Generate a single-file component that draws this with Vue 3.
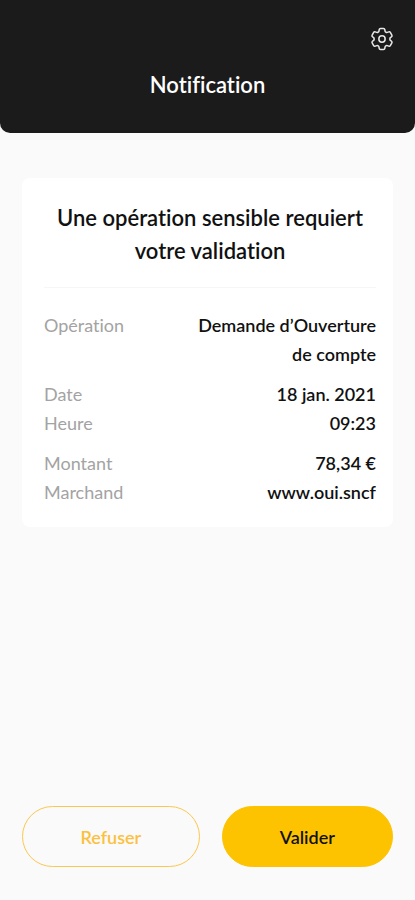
<template>
    <div class="screen">
        <header class="header">
            <button class="settings" type="button" aria-label="Paramètres">
                <svg viewBox="0 0 24 24" xmlns="http://www.w3.org/2000/svg">
                    <path d="M9.594 3.94c.09-.542.56-.94 1.11-.94h2.593c.55 0 1.02.398 1.11.94l.213 1.281c.063.374.313.686.645.87.074.04.147.083.22.127.325.196.72.257 1.075.124l1.217-.456a1.125 1.125 0 0 1 1.37.49l1.296 2.247a1.125 1.125 0 0 1-.26 1.431l-1.003.827c-.293.241-.438.613-.43.992a7.723 7.723 0 0 1 0 .255c-.008.378.137.75.43.991l1.004.827c.424.35.534.955.26 1.43l-1.298 2.247a1.125 1.125 0 0 1-1.369.491l-1.217-.456c-.355-.133-.75-.072-1.076.124a6.47 6.47 0 0 1-.22.128c-.331.183-.581.495-.644.869l-.213 1.281c-.09.543-.56.94-1.11.94h-2.594c-.55 0-1.019-.398-1.11-.94l-.213-1.281c-.062-.374-.312-.686-.644-.87a6.52 6.52 0 0 1-.22-.127c-.325-.196-.72-.257-1.076-.124l-1.217.456a1.125 1.125 0 0 1-1.369-.49l-1.297-2.247a1.125 1.125 0 0 1 .26-1.431l1.004-.827c.292-.24.437-.613.43-.991a6.932 6.932 0 0 1 0-.255c.007-.38-.138-.751-.43-.992l-1.004-.827a1.125 1.125 0 0 1-.26-1.43l1.297-2.247a1.125 1.125 0 0 1 1.37-.491l1.216.456c.356.133.751.072 1.076-.124.072-.044.146-.086.22-.128.332-.183.582-.495.644-.869l.214-1.28Z" />
                    <circle cx="12" cy="12" r="2.7" />
                </svg>
            </button>
            <h1>Notification</h1>
        </header>

        <main class="card">
            <h2>Une opération sensible requiert votre validation</h2>
            <dl v-for="(group, i) in groups" :key="i" class="group">
                <div v-for="row in group" :key="row.label" class="row">
                    <dt>{{ row.label }}</dt>
                    <dd>{{ row.value }}</dd>
                </div>
            </dl>
        </main>

        <footer class="actions">
            <button class="btn btn-outline" type="button">Refuser</button>
            <button class="btn btn-primary" type="button">Valider</button>
        </footer>
    </div>
</template>

<script setup>
const groups = [
    [{ label: "Opération", value: "Demande d’Ouverture de compte" }],
    [
        { label: "Date", value: "18 jan. 2021" },
        { label: "Heure", value: "09:23" },
    ],
    [
        { label: "Montant", value: "78,34 €" },
        { label: "Marchand", value: "www.oui.sncf" },
    ],
];
</script>

<style>
body {
    background: #fafafa;
}
</style>

<style scoped>
.screen {
    display: flex;
    flex-direction: column;
    box-sizing: border-box;
    min-height: 100vh;
    background: #fafafa;
    color: #111;
    font-family: Lato, "Liberation Sans", sans-serif;
    font-variant-ligatures: none;
}

.header {
    display: flex;
    flex-direction: column;
    padding: 25px 19px 32px;
    background: #1b1b1b;
    border-radius: 0 0 10px 10px;
    color: #fff;
}

.settings {
    align-self: flex-end;
    width: 28px;
    height: 28px;
    padding: 0;
    border: 0;
    background: none;
    cursor: pointer;
}

.settings svg {
    display: block;
    width: 28px;
    height: 28px;
    fill: none;
    stroke: #e8e8e8;
    stroke-width: 1.3;
    stroke-linejoin: round;
}

.header h1 {
    margin: 16px 0 0;
    font-size: 22px;
    font-weight: 600;
    line-height: 32px;
    text-align: center;
}

.card {
    margin: 45px 22px 0;
    padding: 23px 17px 20px 22px;
    background: #fff;
    border-radius: 8px;
}

.card h2 {
    margin: 0 0 23px;
    padding: 0 0 20px;
    border-bottom: 1px solid #f6f6f6;
    font-size: 22px;
    font-weight: 600;
    line-height: 33px;
    text-align: center;
}

.group {
    margin: 0;
}

.group + .group {
    margin-top: 11px;
}

.row {
    display: flex;
    justify-content: space-between;
    font-size: 18px;
    line-height: 29px;
}

.row dt {
    color: #a3a3a3;
}

.row dd {
    max-width: 200px;
    margin: 0;
    font-weight: 600;
    text-align: right;
}

.actions {
    display: flex;
    gap: 22px;
    margin-top: auto;
    padding: 40px 22px 33px;
}

.btn {
    flex: 25;
    height: 61px;
    border: 1px solid #fdc300;
    border-radius: 31px;
    font: inherit;
    font-size: 18px;
    font-weight: 600;
    cursor: pointer;
}

.btn-outline {
    flex: 26;
    border-color: #fbc84f;
    background: none;
    color: #fbc140;
}

.btn-primary {
    background: #fdc300;
    color: #111;
}
</style>
